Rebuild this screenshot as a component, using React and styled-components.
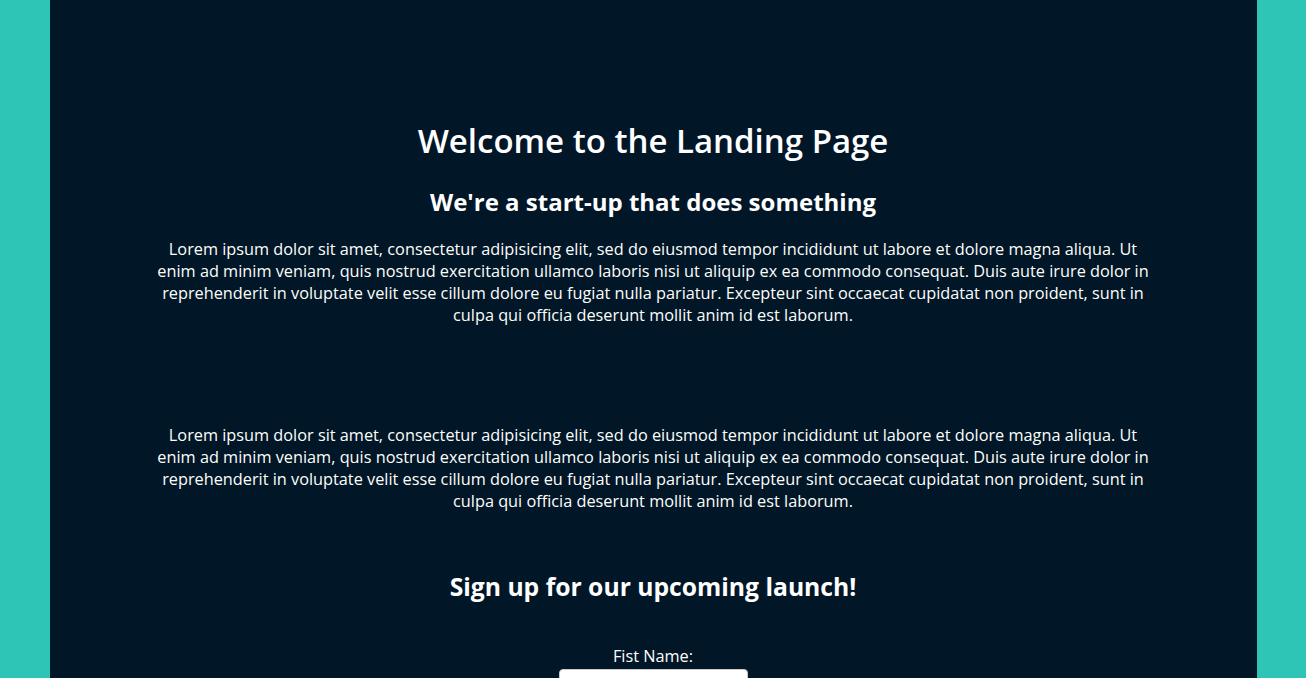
import React from 'react';
import styled, { createGlobalStyle } from 'styled-components';

const GlobalStyle = createGlobalStyle`
  html, body {
    margin: 0;
    padding: 0;
    background: #2ec4b6;
    font-family: "Open Sans", "DejaVu Sans", sans-serif;
  }
`

const Page = styled.div`
  width: 1207px;
  margin: 0 auto;
  min-height: 100vh;
  background: #011627;
  color: #fdfffc;
  text-align: center;
  padding: 118px 105px 40px;
  box-sizing: border-box;
`

const Title = styled.h1`
  font-size: 33px;
  font-weight: 600;
  margin: 0;
  color: #ffffff;
`

const SubTitle = styled.h2`
  font-size: ${props => props.$size || '24px'};
  font-weight: 700;
  margin: ${props => props.$top || '22px'} 0 0;
  color: #ffffff;
`

const Text = styled.p`
  font-size: 16.3px;
  margin: ${props => props.$top || '20px'} 0 0;
  color: #fdfffc;
`

const Form = styled.form`
  display: flex;
  flex-direction: column;
  align-items: center;
  margin-top: 42px;
`

const Label = styled.label`
  font-size: 16.3px;
  margin-bottom: 2px;
`

const Input = styled.input`
  width: 189px;
  height: 30px;
  box-sizing: border-box;
  border: 1px solid #ccc;
  border-radius: 4px;
  background: #fff;
`

const lorem = 'Lorem ipsum dolor sit amet, consectetur adipisicing elit, sed do eiusmod tempor incididunt ut labore et dolore magna aliqua. Ut enim ad minim veniam, quis nostrud exercitation ullamco laboris nisi ut aliquip ex ea commodo consequat. Duis aute irure dolor in reprehenderit in voluptate velit esse cillum dolore eu fugiat nulla pariatur. Excepteur sint occaecat cupidatat non proident, sunt in culpa qui officia deserunt mollit anim id est laborum.'

const App = () => {
    return (
        <Page>
            <GlobalStyle />
            <Title>Welcome to the Landing Page</Title>
            <SubTitle>We're a start-up that does something</SubTitle>
            <Text>{lorem}</Text>
            <Text $top="98px">{lorem}</Text>
            <SubTitle $top="58px" $size="24.7px">Sign up for our upcoming launch!</SubTitle>
            <Form>
                <Label htmlFor="fname">Fist Name:</Label>
                <Input id="fname" type="text" />
            </Form>
        </Page>
    );
};

export default App;
